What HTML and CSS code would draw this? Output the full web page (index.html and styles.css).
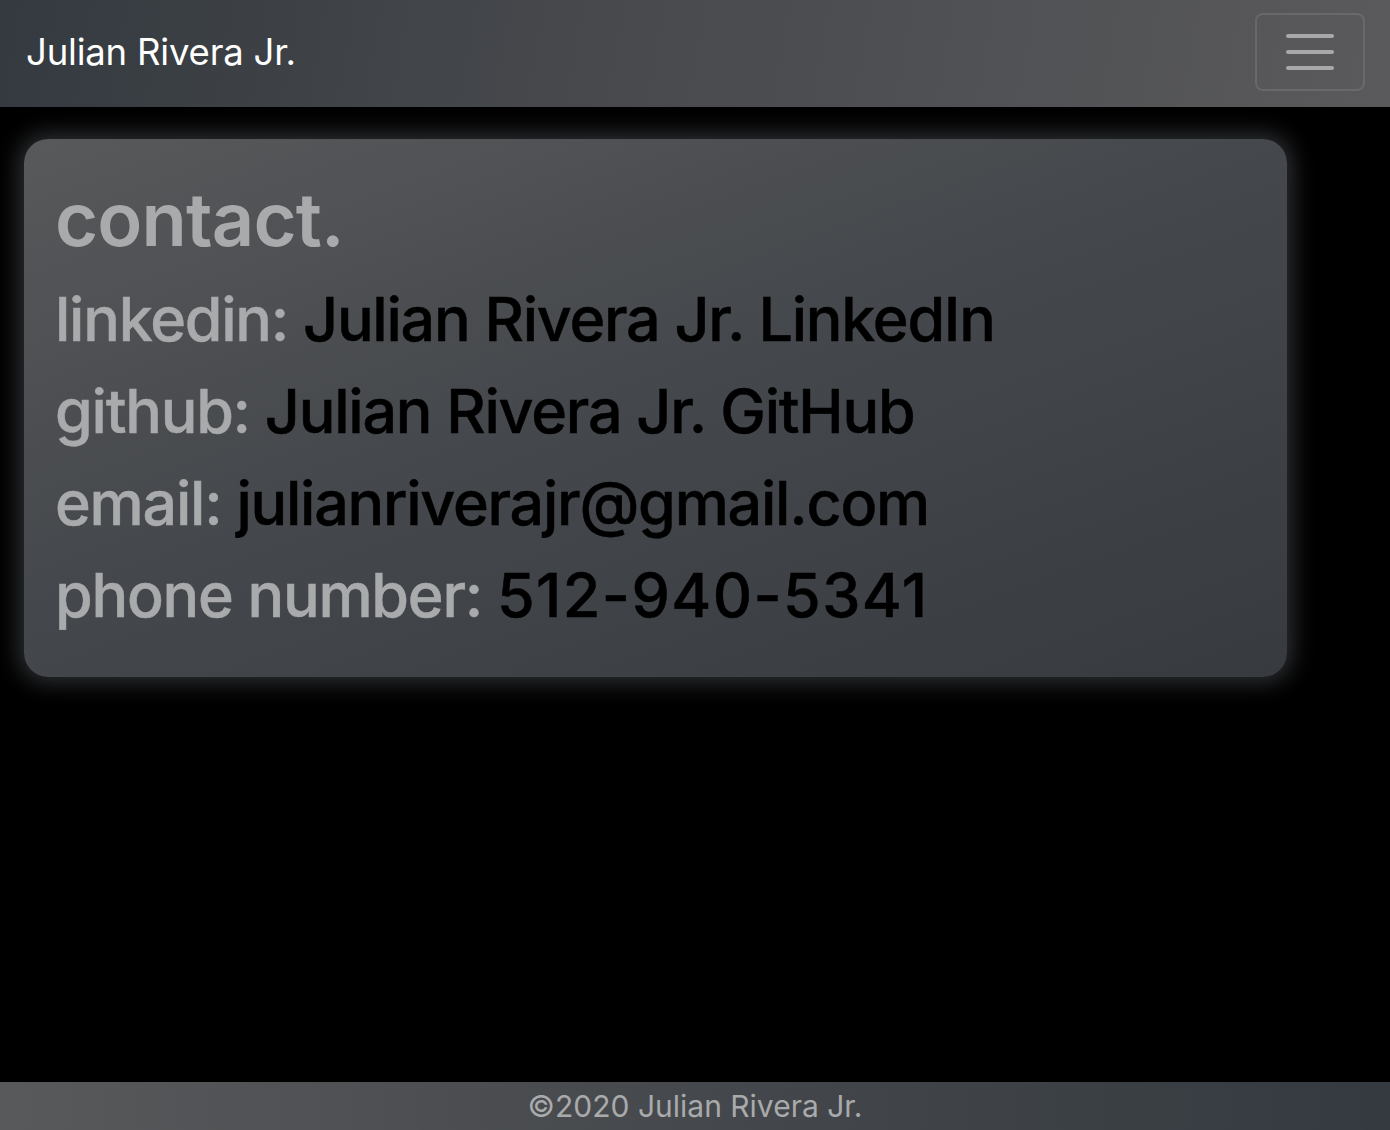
FILE: index.html
```html
<!DOCTYPE html>
<html>
<head>
<meta charset="utf-8">
<link rel="stylesheet" href="styles.css">
</head>
<body>
<div class="page">
  <nav class="navbar">
    <span class="brand">Julian Rivera Jr.</span>
    <button class="toggler" aria-label="menu">
      <span class="bar"></span><span class="bar"></span><span class="bar"></span>
    </button>
  </nav>
  <main class="main">
    <section class="card">
      <h1 class="title">contact.</h1>
      <p class="row"><span class="label">linkedin:</span> <span class="value">Julian Rivera Jr. LinkedIn</span></p>
      <p class="row"><span class="label">github:</span> <span class="value">Julian Rivera Jr. GitHub</span></p>
      <p class="row"><span class="label">email:</span> <span class="value">julianriverajr@gmail.com</span></p>
      <p class="row"><span class="label">phone number:</span> <span class="value digits">512-940-5341</span></p>
    </section>
  </main>
  <footer class="footer">©2020 Julian Rivera Jr.</footer>
</div>
</body>
</html>
```
FILE: styles.css
```css
html, body {
  margin: 0;
  padding: 0;
  background: #000;
  height: 100%;
}
body {
  font-family: Inter, "Noto Sans", sans-serif;
}
.page {
  min-height: 1130px;
  display: flex;
  flex-direction: column;
}
.navbar {
  height: 107px;
  box-sizing: border-box;
  display: flex;
  align-items: center;
  justify-content: space-between;
  padding: 0 25px 3px 26px;
  background: linear-gradient(100deg, #343a40 0%, #46484c 40%, #5a5a5c 100%);
}
.brand {
  color: #fff;
  font-size: 36.5px;
  font-weight: 400;
  letter-spacing: -0.2px;
}
.toggler {
  width: 110px;
  height: 78px;
  box-sizing: border-box;
  border: 2px solid rgba(255,255,255,0.1);
  border-radius: 8px;
  background: transparent;
  display: flex;
  flex-direction: column;
  align-items: center;
  justify-content: center;
  gap: 12px;
  padding: 0;
}
.bar {
  display: block;
  width: 48px;
  height: 4px;
  border-radius: 2px;
  background: #a8a8a9;
}
.main {
  flex: 1;
  padding: 32px 103px 0 24px;
}
.card {
  border-radius: 24px;
  background: linear-gradient(160deg, #58595b 0%, #45484c 45%, #373b40 100%);
  box-shadow: 0 0 22px 6px rgba(160,170,180,0.28);
  padding: 40px 31px 40px 31px;
  height: 538px;
  box-sizing: border-box;
}
.title {
  margin: 0 0 14px 0;
  color: #a9aaac;
  font-size: 74px;
  font-weight: 600;
  line-height: 80px;
  letter-spacing: -0.8px;
}
.row {
  margin: 0;
  font-size: 61px;
  line-height: 92px;
  font-weight: 500;
  letter-spacing: -1.25px;
  -webkit-text-stroke: 0.5px currentColor;
}
.label { color: #a9aaac; -webkit-text-stroke-color: #a9aaac; }
.value { color: #000; -webkit-text-stroke-color: #000; }
.digits { letter-spacing: 1.4px; }
.footer {
  height: 48px;
  display: flex;
  align-items: center;
  justify-content: center;
  color: #a9aaac;
  font-size: 30px;
  background: linear-gradient(90deg, #58595b 0%, #45484c 50%, #343a40 100%);
}
```
